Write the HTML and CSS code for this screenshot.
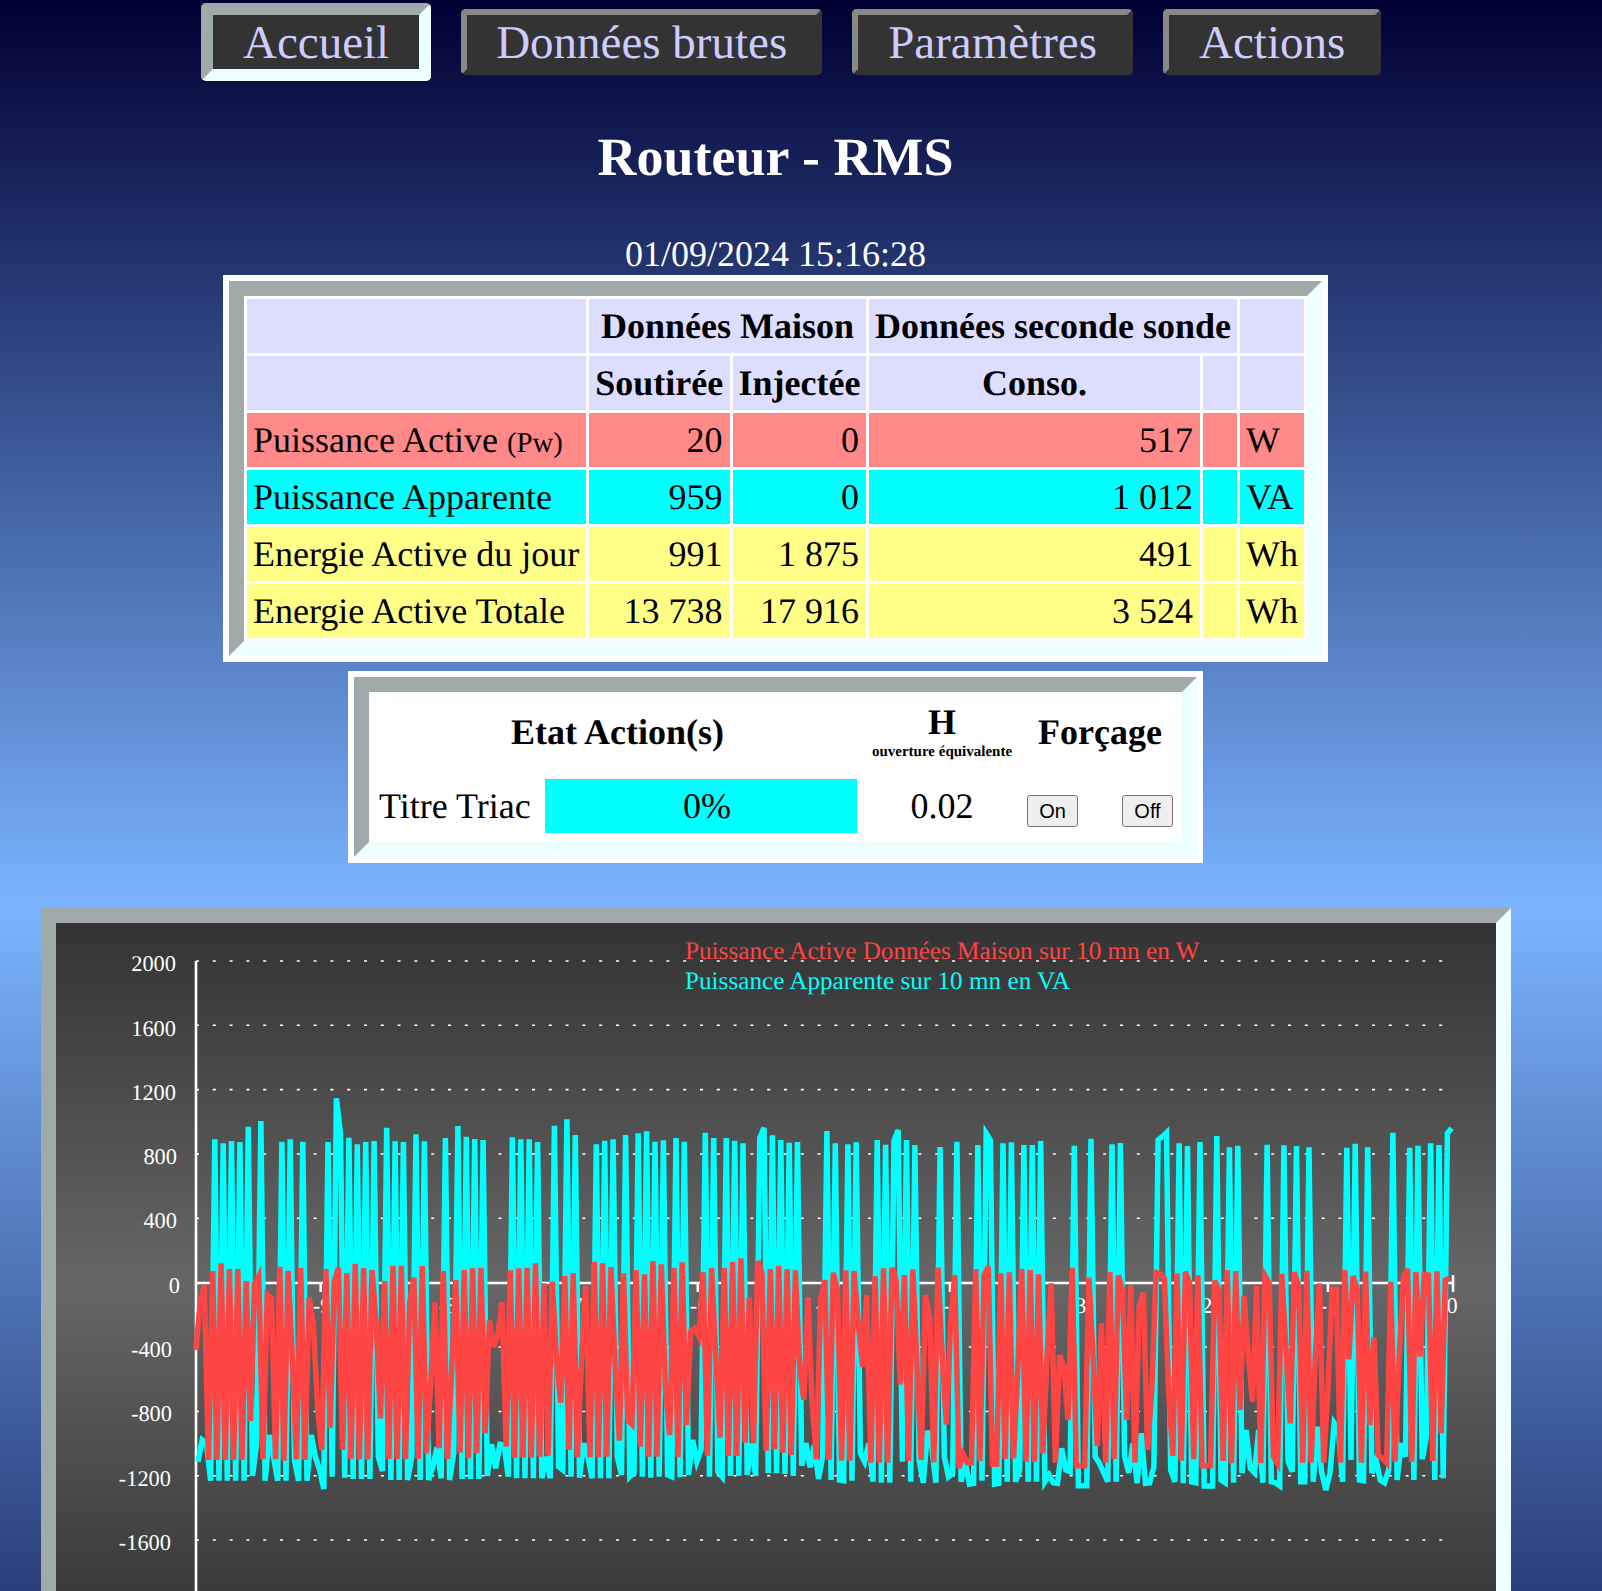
FILE: index.html
```html
<!DOCTYPE html>
<html lang="fr">

<head>
    <meta charset="UTF-8" />
    <title>Routeur - RMS</title>
    <link rel="stylesheet" href="styles.css">
</head>

<body>
    <div class="page">
        <nav class="menu">
            <a class="tab active">Accueil</a>
            <a class="tab tab-brutes">Données brutes</a>
            <a class="tab">Paramètres</a>
            <a class="tab">Actions</a>
        </nav>

        <h1>Routeur - RMS</h1>
        <div class="date">01/09/2024 15:16:28</div>

        <div class="frame frame-data">
            <table class="data">
                <colgroup>
                    <col class="c-label">
                    <col class="c-sout">
                    <col class="c-inj">
                    <col class="c-conso">
                    <col class="c-empty">
                    <col class="c-unit">
                </colgroup>
                <tr class="head">
                    <th></th>
                    <th colspan="2">Données Maison</th>
                    <th colspan="2">Données seconde sonde</th>
                    <th></th>
                </tr>
                <tr class="head">
                    <th></th>
                    <th>Soutirée</th>
                    <th>Injectée</th>
                    <th>Conso.</th>
                    <th></th>
                    <th></th>
                </tr>
                <tr class="pw">
                    <td>Puissance Active <small>(Pw)</small></td>
                    <td class="num">20</td>
                    <td class="num">0</td>
                    <td class="num">517</td>
                    <td></td>
                    <td>W</td>
                </tr>
                <tr class="va">
                    <td>Puissance Apparente</td>
                    <td class="num">959</td>
                    <td class="num">0</td>
                    <td class="num">1 012</td>
                    <td></td>
                    <td>VA</td>
                </tr>
                <tr class="wh">
                    <td>Energie Active du jour</td>
                    <td class="num">991</td>
                    <td class="num">1 875</td>
                    <td class="num">491</td>
                    <td></td>
                    <td>Wh</td>
                </tr>
                <tr class="wh">
                    <td>Energie Active Totale</td>
                    <td class="num">13 738</td>
                    <td class="num">17 916</td>
                    <td class="num">3 524</td>
                    <td></td>
                    <td>Wh</td>
                </tr>
            </table>
        </div>

        <div class="frame frame-actions">
            <table class="actions">
                <colgroup>
                    <col class="a-label">
                    <col class="a-bar">
                    <col class="a-h">
                    <col class="a-force">
                </colgroup>
                <tr class="actions-head">
                    <th class="etat" colspan="2">Etat Action(s)</th>
                    <th class="h-cell">H<div class="sub">ouverture équivalente</div></th>
                    <th class="force">Forçage</th>
                </tr>
                <tr>
                    <td class="triac">Titre Triac</td>
                    <td class="bar">
                        <div class="gauge">
                            <div class="gauge-fill"></div>
                            <div class="gauge-text">0%</div>
                        </div>
                    </td>
                    <td class="center">0.02</td>
                    <td class="buttons">
                        <button>On</button>
                        <button>Off</button>
                    </td>
                </tr>
            </table>
        </div>

        <div class="graph">
            <svg id="chart" class="chart" viewBox="56 923 1440 720" width="1440" height="720">
                <g class="grid">
                    <line x1="196" x2="1445" y1="961" y2="961" />
                    <line x1="196" x2="1445" y1="1025.3" y2="1025.3" />
                    <line x1="196" x2="1445" y1="1089.6" y2="1089.6" />
                    <line x1="196" x2="1445" y1="1154" y2="1154" />
                    <line x1="196" x2="1445" y1="1218.3" y2="1218.3" />
                    <line x1="196" x2="1445" y1="1347" y2="1347" />
                    <line x1="196" x2="1445" y1="1411.5" y2="1411.5" />
                    <line x1="196" x2="1445" y1="1475.8" y2="1475.8" />
                    <line x1="196" x2="1445" y1="1540" y2="1540" />
                </g>
                <g class="axis">
                    <line x1="196" x2="196" y1="961" y2="1643" />
                    <path d="M196 1283H1453M320.7 1283v9M446.4 1283v9M572 1283v9M697.8 1283v9M823.5 1283v9M950 1283v9M1076 1283v9M1201.5 1283v9M1328 1283v9M1453 1275v17" />
                </g>
                <g class="labels">
                    <text x="176" y="971">2000</text>
                    <text x="176" y="1036">1600</text>
                    <text x="176" y="1100">1200</text>
                    <text x="177" y="1164">800</text>
                    <text x="177" y="1228">400</text>
                    <text x="180" y="1293">0</text>
                    <text x="172" y="1357">-400</text>
                    <text x="172" y="1421">-800</text>
                    <text x="171" y="1486">-1200</text>
                    <text x="171" y="1550">-1600</text>
                </g>
                <g class="ticks">
                    <text x="322" y="1313">-9</text>
                    <text x="448" y="1313">-8</text>
                    <text x="573" y="1313">-7</text>
                    <text x="699" y="1313">-6</text>
                    <text x="825" y="1313">-5</text>
                    <text x="951" y="1313">-4</text>
                    <text x="1077" y="1313">-3</text>
                    <text x="1203" y="1313">-2</text>
                    <text x="1329" y="1313">-1</text>
                    <text x="1452" y="1313">0</text>
                </g>
                <text class="legend-red" x="685" y="959">Puissance Active Données Maison sur 10 mn en W</text>
                <text class="legend-cyan" x="685" y="989">Puissance Apparente sur 10 mn en VA</text>
            </svg>
        </div>
    </div>
    <script src="chart.js"></script>
</body>

</html>
```

FILE: styles.css
```css
html,
body {
    margin: 0;
    height: 1591px;
    overflow: hidden;
}

body {
    background: linear-gradient(#000033 0, #7ab4ff 905px, #000033 1951px) no-repeat;
    font-family: "Liberation Serif", "Times New Roman", serif;
    text-rendering: geometricPrecision;
}

.page {
    width: 1551px;
}

/* menu */
.menu {
    display: flex;
    align-items: center;
    gap: 30px;
    margin-left: 201px;
    padding-top: 3px;
    height: 78px;
}

.tab {
    display: block;
    padding: 2px 30px 0;
    font-size: 47px;
    line-height: 52px;
    color: #ccccff;
    background: #333;
    border: 6px solid;
    border-color: #888 #333 #333 #888;
    border-radius: 5px;
}

.tab-brutes {
    padding: 2px 29px 0;
}

.active {
    border-width: 12px;
    border-color: #a0aaaa #eeffff #eeffff #a0aaaa;
}

h1 {
    margin: 45px 0 0;
    font-size: 54px;
    line-height: 62px;
    color: #fff;
    text-align: center;
}

.date {
    margin-top: 46px;
    font-size: 36px;
    line-height: 41px;
    color: #fff;
    text-align: center;
}

/* cadres */
.frame {
    box-sizing: content-box;
    margin-left: auto;
    margin-right: auto;
    background: #fff;
    border: 15px solid;
    border-color: #a0aaaa #eeffff #eeffff #a0aaaa;
    outline: 6px solid #fff;
}

.frame-data {
    width: 1063px;
    margin-top: 6px;
}

.frame-actions {
    width: 813px;
    margin-top: 21px;
    padding-bottom: 6px;
}

table {
    border-collapse: separate;
    border-spacing: 3px;
    table-layout: fixed;
    width: 100%;
}

th,
td {
    padding: 0 7px 0 6px;
    font-size: 36px;
    font-weight: normal;
    white-space: nowrap;
    color: #000;
}

th {
    font-weight: bold;
}

.data tr {
    height: 54px;
}

.c-label { width: 339px; }
.c-sout { width: 140.5px; }
.c-inj { width: 133.5px; }
.c-conso { width: 331px; }
.c-empty { width: 34px; }
.c-unit { width: 64px; }

.head th {
    background: #ddddff;
    padding: 0 6px;
}

.pw td { background: #ff8888; }
.va td { background: #00ffff; }
.wh td { background: #ffff88; }

small {
    font-size: 28.8px;
}

.num {
    text-align: right;
}

/* actions */
.a-label { width: 170px; }
.a-bar { width: 312px; }
.a-h { width: 162px; }

.actions-head {
    height: 81px;
}

.actions-head .etat {
    padding: 0 0 8px 6px;
}

.actions-head .h-cell {
    padding: 0 0 10px 2px;
}

.actions-head .force {
    padding: 0 4px 8px 0;
}

.sub {
    margin-top: 2px;
    font-size: 15px;
    line-height: 15px;
}

.actions tr:last-child {
    height: 54px;
}

.triac {
    padding: 0 7px;
}

.bar {
    padding: 6px;
    background: #00ffff;
}

.gauge {
    display: flex;
    height: 42px;
    line-height: 42px;
}

.gauge-fill {
    width: 1px;
    background: #eeeeaa;
}

.gauge-text {
    flex: 1;
    padding-left: 11px;
    text-align: center;
}

.center {
    padding: 0 0 0 2px;
    text-align: center;
}

td.buttons {
    display: flex;
    justify-content: space-between;
    padding: 16px 6px 0 2px;
}

button {
    box-sizing: border-box;
    width: 51px;
    height: 32px;
    padding: 0;
    font-family: "Liberation Sans", Arial, sans-serif;
    font-size: 20px;
    color: #000;
    background: #efefef;
    border: 1px solid #767676;
    border-radius: 3px;
}

/* graphe */
.graph {
    width: 1440px;
    margin: 51px auto 0;
    background: linear-gradient(#333, #666 50%, #333);
    border: 15px solid;
    border-color: #a0aaaa #eeffff #eeffff #a0aaaa;
}

.chart {
    display: block;
}

.chart text {
    font-family: "Liberation Serif", "Times New Roman", serif;
}

.grid line {
    stroke: #fff;
    stroke-width: 1.6;
    stroke-dasharray: 3 13.8;
}

.axis line,
.axis path {
    stroke: #fff;
    stroke-width: 2.6;
    fill: none;
}

.labels text {
    font-size: 22.4px;
    fill: #fff;
    text-anchor: end;
}

.ticks text {
    font-size: 22.4px;
    fill: #fff;
    text-anchor: middle;
}

.legend-red,
.legend-cyan {
    font-size: 25.2px;
}

.legend-red {
    fill: #ff4444;
}

.legend-cyan {
    fill: #00ffff;
}

.serie {
    fill: none;
    stroke-width: 5.5;
}

.serie-va {
    stroke: #00ffff;
}

.serie-pw {
    stroke: #ff4444;
}
```

FILE: chart.js
```js
// valeurs lues sur 300 points, en pixels sous la ligne y=1090 (x3)
const serieVA = [
    1115, 1050, 1060, 1172, 148, 1172, 160, 1172, 153, 1172, 156, 1172, 110, 1158, 1060, 93, 1172, 1035, 1100, 1172,
    155, 1172, 148, 1110, 1172, 155, 1172, 1035, 1100, 1140, 1197, 156, 1160, 25, 130, 1163, 143, 1167, 163, 1167,
    156, 1167, 153, 1100, 1143, 113, 1170, 154, 1170, 156, 1170, 1100, 133, 1170, 154, 1170, 1130, 1072, 1165, 144,
    1170, 1090, 108, 1167, 140, 1167, 147, 1167, 150, 1158, 1063, 1135, 1063, 1065, 1160, 142, 1165, 148, 1165, 148,
    1165, 156, 1165, 1100, 1165, 107, 1130, 1140, 88, 1160, 135, 1163, 1060, 1100, 1165, 163, 1165, 152, 1165, 148,
    1100, 1155, 135, 1160, 1148, 130, 1160, 124, 1163, 155, 1160, 151, 1155, 1160, 144, 1162, 155, 1155, 1050, 1115,
    1080, 128, 1160, 144, 1145, 1160, 144, 1158, 152, 1158, 160, 1155, 1060, 1158, 144, 113, 1150, 136, 1150, 150,
    1152, 158, 1158, 156, 1127, 1060, 1132, 1065, 1167, 1100, 123, 1170, 160, 1170, 1172, 163, 1172, 157, 1090, 1115,
    1060, 1175, 150, 1178, 164, 1178, 152, 120, 1115, 150, 1175, 165, 1110, 1178, 1022, 1070, 1178, 171, 1100, 1160,
    1150, 155, 1175, 1115, 1182, 1180, 165, 1172, 130, 150, 1182, 1180, 160, 1175, 157, 1175, 1140, 165, 1175, 165,
    1175, 153, 1175, 1155, 1178, 1180, 1075, 1140, 1145, 167, 1187, 1187, 1187, 146, 1100, 1120, 1148, 1175, 163, 1175,
    159, 1100, 1148, 1060, 1180, 1030, 1180, 1178, 1130, 150, 140, 128, 1140, 1175, 160, 1180, 168, 1175, 1178, 156,
    1188, 1188, 1188, 138, 1170, 1178, 172, 1178, 167, 1150, 1020, 1135, 1148, 1020, 1178, 164, 1175, 1178, 1187, 166,
    1115, 1145, 168, 1175, 1175, 172, 1175, 1010, 1145, 1200, 1150, 1000, 1020, 1175, 173, 1110, 161, 1170, 1172, 172,
    1150, 1110, 1170, 1178, 1140, 128, 1170, 1060, 1100, 173, 1170, 167, 1108, 1040, 160, 1170, 165, 1165, 130, 115
];

const seriePW = [
    780, 640, 585, 1110, 543, 1110, 520, 1110, 537, 1110, 537, 1110, 573, 993, 582, 558, 1108, 614, 625, 1108,
    530, 1112, 543, 800, 1108, 533, 1110, 623, 700, 950, 1080, 537, 1013, 575, 533, 1080, 550, 1108, 521, 1108,
    534, 1108, 540, 700, 985, 573, 1107, 527, 1107, 527, 1108, 640, 563, 1107, 528, 1090, 880, 638, 1075, 543,
    1107, 840, 570, 1088, 540, 1105, 535, 1090, 533, 1030, 692, 770, 735, 636, 1070, 541, 1103, 535, 1103, 533,
    1103, 520, 1100, 580, 1097, 575, 810, 938, 558, 1080, 550, 1102, 800, 587, 1102, 515, 1102, 520, 1100, 531,
    830, 1052, 550, 990, 1003, 540, 1070, 553, 1100, 513, 1100, 523, 900, 1035, 533, 1102, 517, 1005, 725, 715,
    740, 547, 1097, 534, 800, 1043, 533, 1098, 516, 1098, 505, 1058, 622, 1060, 513, 548, 1082, 537, 1078, 527,
    1088, 537, 1095, 541, 830, 930, 622, 940, 1108, 630, 570, 1110, 548, 600, 1112, 541, 1112, 543, 700, 830,
    615, 1118, 558, 1118, 535, 1118, 533, 570, 883, 555, 1113, 538, 830, 1110, 615, 680, 1117, 533, 800, 1003,
    700, 555, 1135, 1092, 1118, 1118, 537, 1113, 555, 530, 1123, 1123, 550, 1107, 547, 1105, 850, 537, 1115, 540,
    1115, 553, 1090, 800, 580, 1118, 795, 830, 990, 533, 1127, 1127, 1127, 563, 800, 1068, 700, 1118, 546, 1107,
    556, 600, 990, 585, 1118, 650, 608, 1080, 900, 548, 552, 565, 900, 1097, 550, 1112, 545, 580, 1108, 555,
    1127, 1127, 1127, 572, 600, 1113, 540, 1120, 543, 960, 618, 790, 935, 588, 1120, 557, 580, 1100, 1120, 552,
    780, 1000, 546, 590, 1118, 542, 1118, 800, 580, 1118, 900, 598, 598, 1118, 540, 808, 558, 600, 1118, 545,
    1005, 742, 1095, 1105, 1118, 575, 1115, 800, 565, 536, 1115, 546, 800, 553, 555, 1113, 544, 1030, 570, 565
];

const PAS = 4.1926;

function traceSerie(valeurs, x0, classe) {
    const points = valeurs.map((v, i) => (x0 + i * PAS).toFixed(1) + ',' + (1090 + v / 3).toFixed(1));
    const ligne = document.createElementNS('http://www.w3.org/2000/svg', 'polyline');
    ligne.setAttribute('points', points.join(' '));
    ligne.setAttribute('class', 'serie ' + classe);
    document.getElementById('chart').appendChild(ligne);
}

traceSerie(serieVA, 198, 'serie-va');
traceSerie(seriePW, 195.9, 'serie-pw');
```
